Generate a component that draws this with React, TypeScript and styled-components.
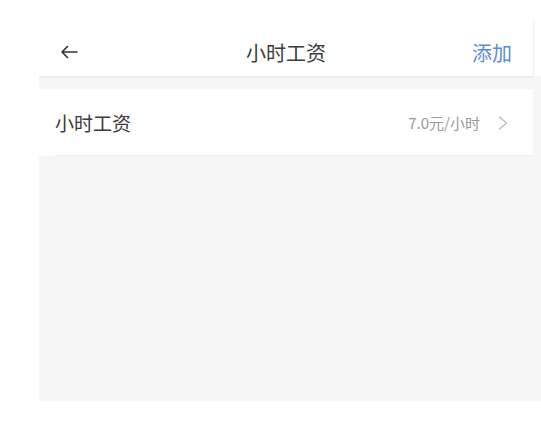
import React from 'react';
import styled, { createGlobalStyle } from 'styled-components';

const GlobalStyle = createGlobalStyle`
    html, body {
        margin: 0;
        padding: 0;
        background: #fff;
        font-family: "Noto Sans CJK SC", "Noto Sans", sans-serif;
    }
`

const App = () => {
    return (
        <>
            <GlobalStyle />
            <Screen>
                <Header>
                    <BackBtn>
                        <svg width="18" height="14" viewBox="0 0 18 14" fill="none">
                            <path d="M17 7H2M7.5 1.5L2 7l5.5 5.5" stroke="#333" strokeWidth="1.6" strokeLinecap="round" strokeLinejoin="round" />
                        </svg>
                    </BackBtn>
                    <Title>小时工资</Title>
                    <AddBtn>添加</AddBtn>
                </Header>
                <Content>
                    <Row>
                        <Label>小时工资</Label>
                        <Value>7.0元/小时</Value>
                        <Chevron>
                            <svg width="10" height="14" viewBox="0 0 10 14" fill="none">
                                <path d="M1.5 1l7 6-7 6" stroke="#bbb" strokeWidth="1.3" strokeLinecap="round" strokeLinejoin="round" />
                            </svg>
                        </Chevron>
                    </Row>
                </Content>
            </Screen>
        </>
    );
};

export default App;

const Screen = styled.div`
    margin-left: 39px;
    padding-top: 20px;
    width: 502px;
    display: flex;
    flex-direction: column;
`

const Header = styled.div`
    position: relative;
    z-index: 1;
    width: 494px;
    height: 56px;
    box-sizing: border-box;
    padding: 8px 21px 0 21px;
    display: flex;
    align-items: center;
    background: #fff;
    box-shadow: 1px 1px 2px rgba(0, 0, 0, 0.08);
`

const BackBtn = styled.div`
    width: 60px;
    display: flex;
    align-items: center;
`

const Title = styled.div`
    flex: 1;
    text-align: center;
    font-size: 20px;
    color: #3a3a3a;
`

const AddBtn = styled.div`
    width: 60px;
    text-align: right;
    font-size: 20px;
    color: #5b89d6;
`

const Content = styled.div`
    height: 325px;
    padding-top: 13px;
    box-sizing: border-box;
    background: #f6f6f6;
`

const Row = styled.div`
    width: 494px;
    height: 67px;
    box-sizing: border-box;
    padding: 0 25px 0 16px;
    display: flex;
    align-items: center;
    background: #fff;
    position: relative;
    &::after {
        content: '';
        position: absolute;
        left: 16px;
        right: 0;
        bottom: 0;
        height: 1px;
        background: #eee;
    }
`

const Label = styled.div`
    flex: 1;
    font-size: 19px;
    color: #3a3a3a;
`

const Value = styled.div`
    font-size: 15px;
    color: #9a9a9a;
    margin-right: 18px;
`

const Chevron = styled.div`
    display: flex;
    align-items: center;
`
